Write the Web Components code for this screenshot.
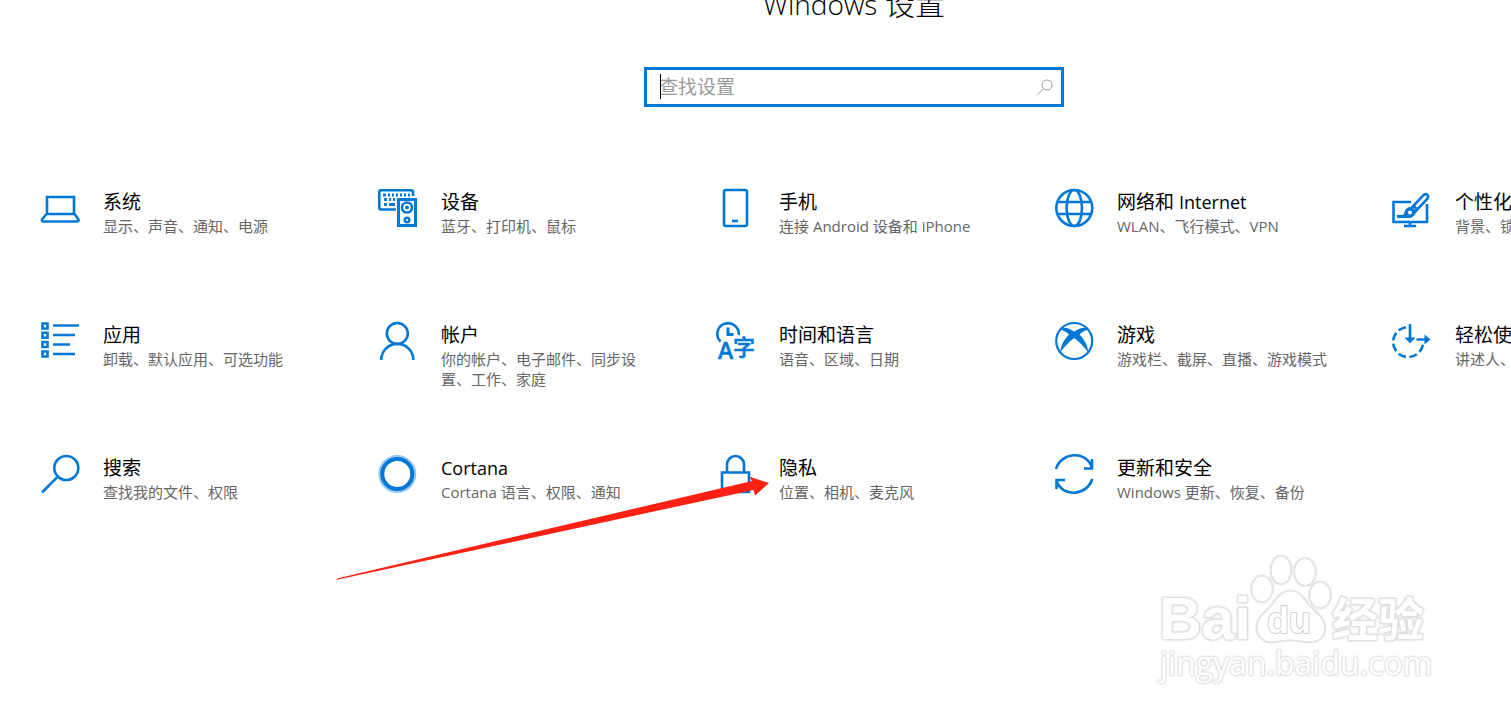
<!DOCTYPE html>
<html lang="zh-CN">
<head>
<meta charset="utf-8">
<title>Windows 设置</title>
<style>
  body {
    margin: 0;
    min-height: 100vh;
    position: relative;
    overflow: hidden;
    background: #fff;
    color: #000;
    font-family: "Open Sans", "Noto Sans CJK SC", sans-serif;
  }
</style>
</head>
<body>
<settings-page>
  <settings-search slot="search"></settings-search>

  <settings-tile icon="system"><span slot="title">系统</span><span slot="desc">显示、声音、通知、电源</span></settings-tile>
  <settings-tile icon="devices"><span slot="title">设备</span><span slot="desc">蓝牙、打印机、鼠标</span></settings-tile>
  <settings-tile icon="phone"><span slot="title">手机</span><span slot="desc">连接 Android 设备和 iPhone</span></settings-tile>
  <settings-tile icon="network"><span slot="title">网络和 <latin-text>Internet</latin-text></span><span slot="desc">WLAN、飞行模式、VPN</span></settings-tile>
  <settings-tile icon="personal"><span slot="title">个性化</span><span slot="desc">背景、锁屏、颜色</span></settings-tile>

  <settings-tile icon="apps"><span slot="title">应用</span><span slot="desc">卸载、默认应用、可选功能</span></settings-tile>
  <settings-tile icon="account"><span slot="title">帐户</span><span slot="desc">你的帐户、电子邮件、同步设置、工作、家庭</span></settings-tile>
  <settings-tile icon="time"><span slot="title">时间和语言</span><span slot="desc">语音、区域、日期</span></settings-tile>
  <settings-tile icon="gaming"><span slot="title">游戏</span><span slot="desc">游戏栏、截屏、直播、游戏模式</span></settings-tile>
  <settings-tile icon="access"><span slot="title">轻松使用</span><span slot="desc">讲述人、放大镜、高对比度</span></settings-tile>

  <settings-tile icon="search"><span slot="title">搜索</span><span slot="desc">查找我的文件、权限</span></settings-tile>
  <settings-tile icon="cortana"><span slot="title"><latin-text>Cortana</latin-text></span><span slot="desc">Cortana 语言、权限、通知</span></settings-tile>
  <settings-tile icon="privacy"><span slot="title">隐私</span><span slot="desc">位置、相机、麦克风</span></settings-tile>
  <settings-tile icon="update"><span slot="title">更新和安全</span><span slot="desc">Windows 更新、恢复、备份</span></settings-tile>
</settings-page>
<pointer-arrow></pointer-arrow>
<site-watermark></site-watermark>

<script>
const ICONS = {
  system: `<path d="M7 25V9h27v16M6.5 26h28l4 5.500q.5 2-1.500 2H4q-2.500 0-2-2z"/>`,
  devices: `<path d="M18 21.500H3q-1.700 0-1.700-1.700V4q0-1.700 1.700-1.700h30q2 0 2 1.700v4"/>
    <path stroke-width="3" d="M5 7h3M10 7h2M14 7h2M18 7h2M22 7h2M26 7h2M30 7h2M6 11.500h3M11 11.500h2M15 11.500h2M6 16.500h3M11 16.500h6"/>
    <path fill="#fff" d="M20.500 11.500h17v26h-17z" stroke-width="3"/><circle cx="29" cy="19.500" r="5"/><circle cx="29" cy="19.500" r="2" fill="#0078d7" stroke="none"/><circle cx="29" cy="32" r="2.300"/>`,
  phone: `<rect x="8" y="2" width="23" height="36" rx="2"/><path d="M16 33h6"/>`,
  network: `<circle cx="20.300" cy="20" r="18"/><ellipse cx="20.300" cy="20" rx="7.700" ry="18"/><path d="M3.500 14h33.600M3.500 26h33.600"/>`,
  personal: `<path d="M19 14H1.500v20H35V16"/><path d="M18 34v4M12 38h12"/>
    <path fill="#fff" d="M19 20.500 31.500 7.200q2-1.800 3.700-.4t.2 3.800L23 24z"/><path d="m21 17.500 4.500 4"/>
    <path fill="#0078d7" stroke="none" d="M5 27h5c2 0 2-1 2.500-3 .7-3 3-5 5.500-5 3 0 6 3 5.500 5.500C23 28 20 30 16 30H6q-1.500 0-1-3z"/><circle cx="18" cy="24.500" r="2" fill="#fff" stroke="none"/>`,
  access: `<path d="M14 6.200a15 15 0 1 0 17 17" stroke-dasharray="8 3.500"/>
    <path d="M18 3v17M24.500 18.500H36"/><path fill="#0078d7" stroke="none" d="M12.500 16.500h11L18 22.500zM32.500 13.500l6 5-6 5z"/>`,
  apps: `<path d="M2.500 2.500h5v5h-5zM2.500 11.700h5v5h-5zM2.500 21h5v5h-5zM2.500 30.500h5v5h-5z"/><path d="M13 4.500h26M13 14h22M13 23.500h17M13 33h22"/>`,
  account: `<circle cx="19.300" cy="12.500" r="10.500"/><path d="M3.200 39a16 16 0 0 1 32.200 0"/>`,
  time: `<path d="M4.500 20.500A10.700 10.700 0 1 1 22.700 14"/><path d="M12 6.500v7h5.500" stroke-width="3"/>
    <g fill="#0078d7" stroke-width=".5"><text x="2" y="38" font-size="23" font-weight="600">A</text><text x="17" y="34" font-size="22" font-weight="500">字</text></g>`,
  gaming: `<circle cx="20.200" cy="20" r="18" stroke-width="2.200"/><path fill="#0078d7" stroke="none" d="M8 7Q13 5.500 20.200 10.500 27.400 5.500 32.500 7L34.500 9q-4-.3-9 4.500c5 5.500 9 12 8.500 18C31 26.500 25 20.500 20.200 17 15.500 20.500 9.500 26.500 6.500 31.500 6 25.500 10 19 15 13.500Q10 8.700 6 9z"/>`,
  search: `<circle cx="26.300" cy="14" r="12"/><path d="M17.700 22.700 2 38.500"/>`,
  cortana: `<circle cx="19.300" cy="20" r="17" stroke="#9acaf0" stroke-width="4"/><circle cx="19.300" cy="20" r="15" stroke-width="4"/>`,
  privacy: `<path d="M6 18.500h27v19.500H6zM11 18.500v-8a8.500 8.500 0 0 1 17 0v8"/>`,
  update: `<path d="M2 15C7-2 32-4 38 13.500M38 5v9.500h-8M38.300 25C33 42 8 44 2.500 26.500M2.500 35v-9H11"/>`
};

class LatinText extends HTMLElement {
  constructor() {
    super();
    this.attachShadow({ mode: "open" }).innerHTML =
      `<style>:host { display: inline; font-size: var(--latin-size, 18px); }</style><slot></slot>`;
  }
}
customElements.define("latin-text", LatinText);

class SettingsPage extends HTMLElement {
  constructor() {
    super();
    this.attachShadow({ mode: "open" }).innerHTML = `
      <style>
        :host { display: block; min-width: 1708px; box-sizing: border-box; padding: 0 9px; }
        header { display: flex; flex-direction: column; align-items: center; gap: 43px; margin-top: -16px; }
        h1 { margin: 0; font-size: 30px; line-height: 40px; font-weight: 300; --latin-size: 28px; }
        main { display: grid; grid-template-columns: repeat(5, 1fr); grid-auto-rows: minmax(133px, auto); margin-top: 81px; }
      </style>
      <header><h1><latin-text>Windows</latin-text> 设置</h1><slot name="search"></slot></header>
      <main><slot></slot></main>`;
  }
}
customElements.define("settings-page", SettingsPage);

class SettingsSearch extends HTMLElement {
  constructor() {
    super();
    this.attachShadow({ mode: "open" }).innerHTML = `
      <style>
        :host { display: block; width: 420px; }
        label { position: relative; display: flex; align-items: center; height: 40px; box-sizing: border-box; border: 3px solid #0078d7; padding: 0 7px 0 12px; }
        input { flex: 1; min-width: 0; height: 30px; border: 0; padding: 0; outline: 0; background: none; font: inherit; font-size: 19px; color: #000; }
        input::placeholder { color: #999; opacity: 1; }
        .caret { position: absolute; left: 13px; top: 4px; width: 1px; height: 25px; background: #000; }
        svg { width: 18px; height: 18px; }
      </style>
      <label><input type="text" placeholder="查找设置" aria-label="查找设置"><span class="caret"></span>
        <svg viewBox="0 0 18 18" fill="none" stroke="#999"><circle cx="11" cy="7" r="5"/><path d="M7.500 10.500 1.500 16.500"/></svg>
      </label>`;
  }
}
customElements.define("settings-search", SettingsSearch);

class SettingsTile extends HTMLElement {
  constructor() {
    super();
    this.attachShadow({ mode: "open" }).innerHTML = `
      <style>
        :host { display: block; }
        a { display: flex; gap: 23px; padding-left: 31px; color: inherit; text-decoration: none; }
        svg { flex: none; width: 40px; height: 40px; }
        div { width: 216px; padding-top: 2px; }
        h2, p { margin: 0; font-weight: 400; }
        h2 { font-size: 19px; line-height: 24px; }
        p { margin-top: 2px; font-size: 15px; line-height: 20px; color: #666; }
      </style>
      <a href="#">
        <svg viewBox="0 0 40 40" fill="none" stroke="#0078d7" stroke-width="2.600" aria-hidden="true"></svg>
        <div><h2><slot name="title"></slot></h2><p><slot name="desc"></slot></p></div>
      </a>`;
  }
  connectedCallback() {
    this.shadowRoot.querySelector("svg").innerHTML = ICONS[this.getAttribute("icon")];
  }
}
customElements.define("settings-tile", SettingsTile);

class PointerArrow extends HTMLElement {
  constructor() {
    super();
    this.attachShadow({ mode: "open" }).innerHTML = `
      <style>
        :host { position: absolute; left: 336px; top: 474px; pointer-events: none; }
        svg { display: block; width: 436px; height: 108px; }
      </style>
      <svg viewBox="0 0 436 108"><path fill="#ff2014" d="M1 104.500 416 7 413 2.500 433 9 419 21.500 417.500 16 2 105.500Q0 106 1 104.500z"/></svg>`;
  }
}
customElements.define("pointer-arrow", PointerArrow);

class SiteWatermark extends HTMLElement {
  constructor() {
    super();
    this.attachShadow({ mode: "open" }).innerHTML = `
      <style>
        :host { position: absolute; right: 66px; bottom: 22px; pointer-events: none; }
        svg { display: block; width: 300px; height: 150px; filter: drop-shadow(0 0 1px #ccc); }
        text { font-family: "Liberation Sans", "Noto Sans CJK SC", sans-serif; font-weight: 700; paint-order: stroke; }
        .domain { font-family: "Open Sans", sans-serif; font-weight: 400; }
      </style>
      <svg viewBox="0 0 300 150" fill="#fff" stroke="#e0e0e0" stroke-width="2" stroke-linejoin="round">
        <text x="14" y="94" font-size="59">Bai</text>
        <g stroke-width="1.200">
          <ellipse cx="117" cy="44" rx="10.500" ry="13"/><ellipse cx="136" cy="25" rx="10" ry="14"/>
          <ellipse cx="160" cy="27" rx="10.500" ry="13.500"/><ellipse cx="175" cy="50" rx="10.500" ry="13"/>
          <path d="M145 46c9 0 14 7 18 13 5 7 17 13 17 24 0 9-7 14-15 14-7 0-12-2-20-2s-13 2-19 2c-9 0-14-7-14-15 0-11 10-15 15-22 5-7 9-14 18-14z"/>
        </g>
        <text x="122" y="88" font-size="36" stroke="#d0d0d0">du</text>
        <text x="187" y="91" font-size="46">经验</text>
        <text class="domain" x="15" y="130" font-size="32" stroke-width="1">jingyan.baidu.com</text>
      </svg>`;
  }
}
customElements.define("site-watermark", SiteWatermark);
</script>
</body>
</html>
